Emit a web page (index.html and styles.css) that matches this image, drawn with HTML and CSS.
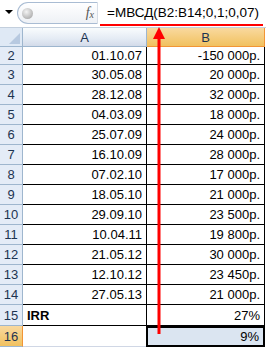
FILE: index.html
```html
<!DOCTYPE html>
<html lang="ru">
<head>
  <meta charset="UTF-8">
  <title>МВСД</title>
  <link rel="stylesheet" href="styles.css">
</head>
<body>
  <div class="fbar">
    <div class="namebox"><span class="drop"></span></div>
    <div class="pill">
      <span class="knob"></span>
      <span class="fx">f<sub>x</sub></span>
    </div>
    <div class="formula">=МВСД(B2:B14;0,1;0,07)</div>
  </div>

  <div class="sheet">
    <div class="corner"><span class="tri"></span></div>
    <div class="colhead">A</div>
    <div class="colhead sel">B</div>

    <div class="rowhead">2</div><div class="cell">01.10.07</div><div class="cell">-150 000р.</div>
    <div class="rowhead">3</div><div class="cell">30.05.08</div><div class="cell">20 000р.</div>
    <div class="rowhead">4</div><div class="cell">28.12.08</div><div class="cell">32 000р.</div>
    <div class="rowhead">5</div><div class="cell">04.03.09</div><div class="cell">18 000р.</div>
    <div class="rowhead">6</div><div class="cell">25.07.09</div><div class="cell">24 000р.</div>
    <div class="rowhead">7</div><div class="cell">16.10.09</div><div class="cell">28 000р.</div>
    <div class="rowhead">8</div><div class="cell">07.02.10</div><div class="cell">17 000р.</div>
    <div class="rowhead">9</div><div class="cell">18.05.10</div><div class="cell">21 000р.</div>
    <div class="rowhead">10</div><div class="cell">29.09.10</div><div class="cell">23 500р.</div>
    <div class="rowhead">11</div><div class="cell">10.04.11</div><div class="cell">19 800р.</div>
    <div class="rowhead">12</div><div class="cell">21.05.12</div><div class="cell">30 000р.</div>
    <div class="rowhead">13</div><div class="cell">12.10.12</div><div class="cell">23 450р.</div>
    <div class="rowhead">14</div><div class="cell">27.05.13</div><div class="cell">21 000р.</div>
    <div class="rowhead">15</div><div class="cell label">IRR</div><div class="cell">27%</div>
    <div class="rowhead sel">16</div><div class="cell empty"></div><div class="cell active">9%</div>

    <svg class="arrow" width="20" height="310" viewBox="0 0 20 310">
      <polygon points="10,0 16,12 4,12" fill="#f00"/>
      <rect x="8.5" y="10" width="3" height="297" fill="#f00"/>
    </svg>
  </div>

  <div class="underline"></div>
</body>
</html>
```

FILE: styles.css
```css
* {
  box-sizing: border-box;
}
body {
  margin: 0;
  width: 266px;
  height: 349px;
  overflow: hidden;
  background: #fff;
  font-family: 'Liberation Sans', Arial, sans-serif;
  font-size: 13px;
  color: #000;
  position: relative;
}

/* formula bar */
.fbar {
  display: flex;
  height: 28px;
  background: #fff;
  border-bottom: 1px solid #c3cfdd;
}
.namebox {
  width: 17px;
  display: flex;
  align-items: center;
  justify-content: center;
  padding-bottom: 3px;
}
.drop {
  width: 0;
  height: 0;
  border-left: 4px solid transparent;
  border-right: 4px solid transparent;
  border-top: 4px solid #000;
}
.pill {
  width: 80px;
  height: 22px;
  margin-top: 2px;
  display: flex;
  align-items: center;
  justify-content: space-between;
  padding: 0 3px 0 4px;
  border: 1px solid #a9bcd3;
  border-right: none;
  border-radius: 11px 0 0 11px;
  background: linear-gradient(#ffffff, #eef1f5);
}
.knob {
  width: 11px;
  height: 11px;
  border-radius: 50%;
  background: radial-gradient(circle at 40% 35%, #f4f4f4, #9a9a9a);
}
.fx {
  font-family: 'Liberation Serif', 'Times New Roman', serif;
  font-style: italic;
  font-size: 14px;
  color: #555;
}
.fx sub {
  font-size: 10px;
  vertical-align: -1px;
}
.formula {
  flex: 1;
  height: 22px;
  margin-top: 2px;
  padding: 0 0 0 9px;
  border-left: 1px solid #d6dde6;
  line-height: 22px;
  font-size: 13.5px;
  white-space: nowrap;
}

/* sheet */
.sheet {
  position: relative;
  display: grid;
  grid-template-columns: 23px 124px 118px;
  grid-template-rows: 19px 18px repeat(12, 20px) 21px 21px;
}
.corner {
  position: relative;
  background: #dfe9f5;
  border-right: 1px solid #9eb6ce;
  border-bottom: 1px solid #9eb6ce;
}
.tri {
  position: absolute;
  right: 2px;
  bottom: 2px;
  width: 0;
  height: 0;
  border-left: 11px solid transparent;
  border-bottom: 11px solid #b7c9e0;
}
.colhead {
  display: flex;
  align-items: center;
  justify-content: center;
  background: linear-gradient(#f9fcfd, #e4ebf4 60%, #d3dbe9);
  border-right: 1px solid #9eb6ce;
  border-bottom: 1px solid #9eb6ce;
  color: #1d3451;
  font-size: 13px;
}
.colhead.sel {
  background: linear-gradient(#f9d99f, #f1c15f);
  border-right-color: #f29536;
  border-bottom-color: #f29536;
}
.rowhead {
  display: flex;
  align-items: center;
  justify-content: center;
  background: #e4ecf7;
  border-right: 1px solid #9eb6ce;
  border-bottom: 1px solid #9eb6ce;
  color: #1d3451;
  font-size: 13px;
}
.rowhead.sel {
  background: linear-gradient(#f9d99f, #f1c15f);
  border-right-color: #f29536;
}
.cell {
  display: flex;
  align-items: center;
  justify-content: flex-end;
  padding: 0 4px;
  border-right: 1px solid #000;
  border-bottom: 1px solid #000;
  white-space: nowrap;
}
.cell.label {
  justify-content: flex-start;
  font-weight: bold;
}
.cell.empty {
  border-right: none;
  border-bottom: 1px solid #d0d7e5;
}
.cell.active {
  background: #dbe5f1;
  border: 2px solid #000;
  margin-left: -1px;
}
.arrow {
  position: absolute;
  left: 149px;
  top: -1px;
}

/* red mark under the formula */
.underline {
  position: absolute;
  left: 100px;
  top: 24px;
  width: 163px;
  height: 2px;
  background: #f00;
}
```
